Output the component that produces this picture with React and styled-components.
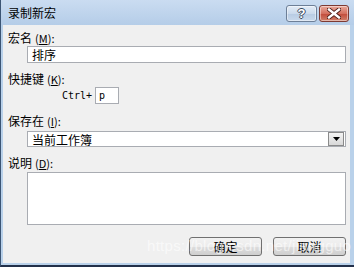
import React from 'react'
import styled, { createGlobalStyle } from 'styled-components'

const GlobalStyle = createGlobalStyle`
    *{
        margin: 0;
        padding: 0;
        box-sizing: border-box;
    }
    body{
        background: #f0f0f0;
        font-family: 'Noto Sans CJK SC', 'Noto Sans', sans-serif;
        font-size: 12px;
        color: #000;
    }
`

const Window = styled.div`
    position: relative;
    width: 354px;
    height: 267px;
    display: flex;
    flex-direction: column;
    background: #b9d1ea;
    border-left: 1px solid #3c5574;
    border-bottom: 2px solid #22304a;
    overflow: hidden;
`

const TitleBar = styled.div`
    height: 25px;
    flex-shrink: 0;
    display: flex;
    align-items: center;
    justify-content: space-between;
    padding: 0 5px 0 7px;
    background: linear-gradient(#cadcf1, #b5cde8);
`

const Title = styled.span`
    font-size: 12px;
    line-height: 15px;
`

const Caption = styled.div`
    display: flex;
    gap: 2px;
    margin-top: 1px;
`

const CapButton = styled.div`
    width: ${p => p.w}px;
    height: 17px;
    border: 1px solid ${p => p.close ? '#7d3a32' : '#6d7f97'};
    border-radius: 3px;
    display: flex;
    align-items: center;
    justify-content: center;
    background: ${p => p.close
        ? 'linear-gradient(#e9a99b, #d4705f 50%, #c24a3a 51%, #d0806a)'
        : 'linear-gradient(#e3ecf7, #cbdaec 50%, #b7cbe3 51%, #c9d9ec)'};
    box-shadow: inset 0 0 0 1px rgba(255,255,255,0.45);
`

const Help = styled.span`
    font-family: 'Liberation Sans', sans-serif;
    font-weight: bold;
    font-size: 13px;
    line-height: 13px;
    color: #fff;
    text-shadow: -1px 0 #3b4a5e, 1px 0 #3b4a5e, 0 -1px #3b4a5e, 0 1px #3b4a5e;
`

const Client = styled.div`
    flex: 1;
    margin: 0 4px 2px 2px;
    background: #f0f0f0;
    display: flex;
    flex-direction: column;
    padding: 5px 4px 0 5px;
`

const Label = styled.div`
    line-height: 15px;
    height: 15px;
    margin-top: ${p => p.mt || 0}px;
    white-space: nowrap;
`

const Paren = styled.span`
    margin-left: 3px;
    font-size: 11px;
`

const Key = styled.span`
    text-decoration: underline;
`

const Field = styled.div`
    margin: ${p => p.mt || 0}px 0 0 19px;
    height: ${p => p.h || 17}px;
    background: #fff;
    border: 1px solid #a9acb2;
    padding: 0 4px;
    line-height: 15px;
    display: flex;
    align-items: center;
    justify-content: space-between;
`

const ShortcutRow = styled.div`
    display: flex;
    align-items: center;
    margin: 1px 0 0 54px;
    gap: 3px;
`

const Mono = styled.span`
    font-family: 'DejaVu Sans Mono', 'Liberation Mono', monospace;
    font-size: 10px;
`

const SmallBox = styled.div`
    width: 24px;
    height: 17px;
    background: #fff;
    border: 1px solid #a9acb2;
    padding: 0 3px;
    display: flex;
    align-items: center;
`

const DropButton = styled.div`
    width: 16px;
    height: 14px;
    margin-right: -3px;
    border: 1px solid #8a8a8a;
    background: linear-gradient(#f4f4f4, #d8d8d8);
    display: flex;
    align-items: center;
    justify-content: center;
`

const Buttons = styled.div`
    margin-top: auto;
    margin-bottom: 7px;
    display: flex;
    justify-content: flex-end;
    gap: 11px;
`

const Button = styled.div`
    width: 73px;
    height: 19px;
    border: 1px solid #707070;
    border-radius: 3px;
    background: linear-gradient(#f2f2f2, #ebebeb 50%, #dddddd 51%, #cfcfcf);
    display: flex;
    align-items: center;
    justify-content: center;
    line-height: 15px;
`

const Watermark = styled.div`
    position: absolute;
    left: 146px;
    top: 237px;
    font-family: 'Liberation Sans', sans-serif;
    font-size: 15px;
    color: rgba(255,255,255,0.6);
    letter-spacing: 0.3px;
    pointer-events: none;
`

const Accel = ({k}) => <Paren>(<Key>{k}</Key>):</Paren>

export default function App(){
    return(
        <Window>
            <GlobalStyle />
            <TitleBar>
                <Title>录制新宏</Title>
                <Caption>
                    <CapButton w={31}><Help>?</Help></CapButton>
                    <CapButton w={30} close>
                        <svg width="14" height="11" viewBox="0 0 14 11">
                            <path d="M2 1.5 L12 9.5 M12 1.5 L2 9.5" stroke="#4a1c16" strokeWidth="4.2" strokeLinecap="square"/>
                            <path d="M2 1.5 L12 9.5 M12 1.5 L2 9.5" stroke="#fff" strokeWidth="2.4" strokeLinecap="square"/>
                        </svg>
                    </CapButton>
                </Caption>
            </TitleBar>
            <Client>
                <Label>宏名<Accel k="M" /></Label>
                <Field mt={1}>排序</Field>
                <Label mt={8}>快捷键<Accel k="K" /></Label>
                <ShortcutRow>
                    <Mono>Ctrl+</Mono>
                    <SmallBox><Mono>p</Mono></SmallBox>
                </ShortcutRow>
                <Label mt={9}>保存在<Accel k="I" /></Label>
                <Field mt={3} h={16}>
                    当前工作簿
                    <DropButton>
                        <svg width="7" height="4" viewBox="0 0 7 4"><path d="M0 0 H7 L3.5 4 Z" fill="#000"/></svg>
                    </DropButton>
                </Field>
                <Label mt={8}>说明<Accel k="D" /></Label>
                <Field mt={2} h={53} />
                <Buttons>
                    <Button>确定</Button>
                    <Button>取消</Button>
                </Buttons>
            </Client>
            <Watermark>https://blog.csdn.net/jiangguo</Watermark>
        </Window>
    )
}
